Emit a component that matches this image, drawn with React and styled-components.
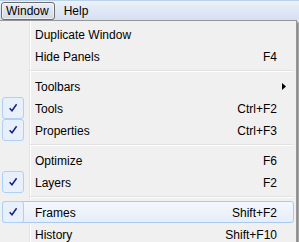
import React from "react"
import styled, { createGlobalStyle } from "styled-components"

const Global = createGlobalStyle`
  html, body {
    margin: 0;
    padding: 0;
    background: #f0f0f0;
    overflow: hidden;
  }
  body {
    font-family: "Liberation Sans", Arial, sans-serif;
    font-size: 12px;
    color: #000;
  }
`

const items = [
  { label: "Duplicate Window" },
  { label: "Hide Panels", shortcut: "F4" },
  { sep: true },
  { label: "Toolbars", submenu: true },
  { label: "Tools", checked: true, shortcut: "Ctrl+F2" },
  { label: "Properties", checked: true, shortcut: "Ctrl+F3" },
  { sep: true },
  { label: "Optimize", shortcut: "F6" },
  { label: "Layers", checked: true, shortcut: "F2" },
  { sep: true },
  { label: "Frames", checked: true, shortcut: "Shift+F2", hot: true },
  { label: "History", shortcut: "Shift+F10" },
]

const Check = () => (
  <svg width="10" height="10" viewBox="0 0 10 10">
    <path
      d="M1.6 5.2 L4 7.8 L8.6 1.2"
      fill="none"
      stroke="#14208a"
      strokeWidth="1.5"
    />
  </svg>
)

const Arrow = () => (
  <svg width="4" height="7" viewBox="0 0 4 7">
    <polygon points="0,0 4,3.5 0,7" fill="#000" />
  </svg>
)

export default function App() {
  return (
    <>
      <Global />
      <MenuBar>
        <BarItem $open>Window</BarItem>
        <BarItem>Help</BarItem>
      </MenuBar>
      <Menu>
        {items.map((it, i) =>
          it.sep ? (
            <Separator key={i} />
          ) : (
            <Item key={i} $hot={it.hot}>
              <Gutter>{it.checked && <CheckBox><Check /></CheckBox>}</Gutter>
              <Label>{it.label}</Label>
              <Shortcut>{it.shortcut}</Shortcut>
              <SubArrow>{it.submenu && <Arrow />}</SubArrow>
            </Item>
          )
        )}
      </Menu>
    </>
  )
}

const MenuBar = styled.div`
  display: flex;
  align-items: center;
  gap: 4px;
  height: 20px;
  box-sizing: border-box;
  padding: 1px 0 0 1px;
  border-top: 1px solid #b9d1ea;
  background: linear-gradient(#eef3fa 0%, #e4ebf7 30%, #d6e0f2 100%);
`

const BarItem = styled.div`
  height: 18px;
  box-sizing: border-box;
  display: flex;
  align-items: center;
  padding: 0 5px 0 4px;
  border: 1px solid ${p => (p.$open ? "#6e6e6e" : "transparent")};
  border-radius: 3px;
  background: ${p =>
    p.$open ? "linear-gradient(#eaeef4, #d3d9e3)" : "transparent"};
  box-shadow: ${p => (p.$open ? "inset 0 0 0 1px rgba(255,255,255,0.5)" : "none")};
`

const Menu = styled.div`
  width: 298px;
  margin-left: -1px;
  box-sizing: border-box;
  border: 1px solid #979797;
  padding: 2px;
  background-color: #f0f0f0;
  background-image: linear-gradient(
    to right,
    transparent 29px,
    #e2e3e3 29px,
    #e2e3e3 30px,
    #ffffff 30px,
    #ffffff 31px,
    transparent 31px
  );
  box-shadow: 2px 2px 2px rgba(0, 0, 0, 0.45);
`

const Item = styled.div`
  display: grid;
  grid-template-columns: 22px 1fr auto 16px;
  align-items: center;
  height: 22px;
  box-sizing: border-box;
  border: 1px solid ${p => (p.$hot ? "#a8caf0" : "transparent")};
  border-radius: 3px;
  background: ${p =>
    p.$hot ? "linear-gradient(#f4f8fd, #e6eef9)" : "transparent"};
`

const Gutter = styled.div`
  width: 22px;
  height: 22px;
  margin: -1px 0 0 -1px;
  display: flex;
`

const CheckBox = styled.div`
  width: 22px;
  height: 22px;
  box-sizing: border-box;
  border: 1px solid #aecff7;
  border-radius: 3px;
  background: #e8f0fb;
  display: flex;
  align-items: center;
  justify-content: center;
`

const Label = styled.span`
  padding-left: 10px;
  white-space: nowrap;
`

const Shortcut = styled.span`
  white-space: nowrap;
`

const SubArrow = styled.span`
  display: flex;
  align-items: center;
  padding-left: 5px;
`

const Separator = styled.div`
  height: 8px;
  margin: 0 1px 0 28px;
  background: linear-gradient(
    transparent 3px,
    #e0e0e0 3px,
    #e0e0e0 4px,
    #ffffff 4px,
    #ffffff 5px,
    transparent 5px
  );
`
